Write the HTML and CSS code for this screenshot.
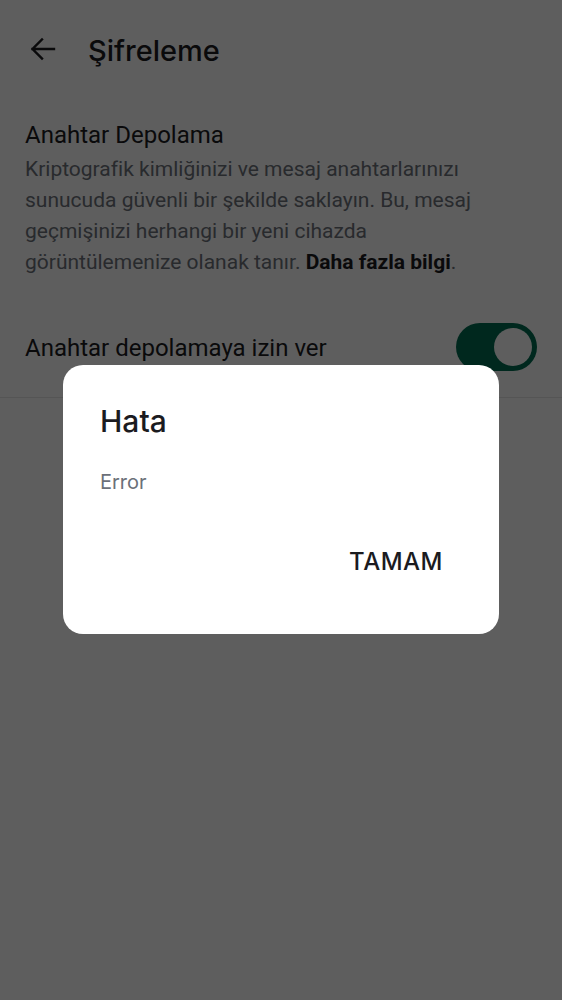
FILE: index.html
```html
<!DOCTYPE html>
<html lang="tr">
<head>
<meta charset="utf-8">
<link rel="stylesheet" href="styles.css">
</head>
<body>
<div class="page">
  <header class="topbar">
    <svg class="back" width="26" height="26" viewBox="0 0 26 26"><path d="M24 13H2.5M12 3.5L2.5 13 12 22.5" fill="none" stroke="#1b1b1f" stroke-width="2.4" stroke-linecap="square"/></svg>
    <h1 class="title">Şifreleme</h1>
  </header>
  <section class="section">
    <h2 class="sec-title">Anahtar Depolama</h2>
    <p class="sec-desc">Kriptografik kimliğinizi ve mesaj anahtarlarınızı sunucuda güvenli bir şekilde saklayın. Bu, mesaj geçmişinizi herhangi bir yeni cihazda görüntülemenize olanak tanır. <b class="more">Daha fazla bilgi</b>.</p>
  </section>
  <div class="row">
    <span class="row-label">Anahtar depolamaya izin ver</span>
    <span class="switch"><span class="thumb"></span></span>
  </div>
</div>
<div class="scrim"></div>
<div class="dialog-wrap">
  <div class="dialog">
    <h3 class="d-title">Hata</h3>
    <p class="d-body">Error</p>
    <div class="d-actions"><button class="d-btn">TAMAM</button></div>
  </div>
</div>
</body>
</html>
```
FILE: styles.css
```css
html, body { margin: 0; padding: 0; }
body { background: #fff; font-family: Roboto, "Noto Sans", sans-serif; width: 562px; height: 1000px; overflow: hidden; }
.page { display: flex; flex-direction: column; }
.topbar { display: flex; align-items: center; height: 100px; padding-left: 30px; }
.back { width: 26px; height: 26px; margin-top: -2px; }
.title { margin: 0 0 0 32px; font-family: Inter, Roboto, sans-serif; font-weight: 500; font-size: 29px; color: #1b1b1f; }
.section { padding: 19px 40px 0 25px; }
.sec-title { margin: 0; font-weight: 400; font-size: 24px; line-height: 32px; color: #1b1b1f; }
.sec-desc { margin: 3px 0 0 0; font-size: 21px; line-height: 31px; color: #6e737b; }
.sec-desc .more { color: #1b1b1f; font-weight: 700; }
.row { display: flex; align-items: center; justify-content: space-between; padding: 20px 25px 0 25px; height: 120px; border-bottom: 1px solid #e6e6e6; box-sizing: border-box; }
.row-label { font-size: 24px; color: #1b1b1f; }
.switch { width: 81px; height: 48px; border-radius: 24px; background: #006c51; display: flex; align-items: center; justify-content: flex-end; padding-right: 5px; box-sizing: border-box; margin-top: -2px; }
.thumb { width: 38px; height: 38px; border-radius: 50%; background: #fff; }
.scrim { position: fixed; inset: 0; background: rgba(0,0,0,0.63); }
.dialog-wrap { position: fixed; inset: 0; display: flex; justify-content: center; align-items: flex-start; padding-top: 365px; }
.dialog { width: 436px; height: 269px; background: #fff; border-radius: 20px; padding: 37px 37px 0 37px; box-sizing: border-box; font-family: Inter, Roboto, sans-serif; }
.d-title { margin: 0; font-size: 30px; font-weight: 500; color: #1b1b1f; line-height: 38px; }
.d-body { margin: 29px 0 0 0; font-size: 20px; color: #6b7079; line-height: 26px; }
.d-actions { display: flex; justify-content: flex-end; margin-top: 52px; padding-right: 19px; }
.d-btn { border: 0; background: none; padding: 0; font-family: Inter, Roboto, sans-serif; font-size: 24px; font-weight: 500; color: #1b1b1f; letter-spacing: 0.5px; }
```
